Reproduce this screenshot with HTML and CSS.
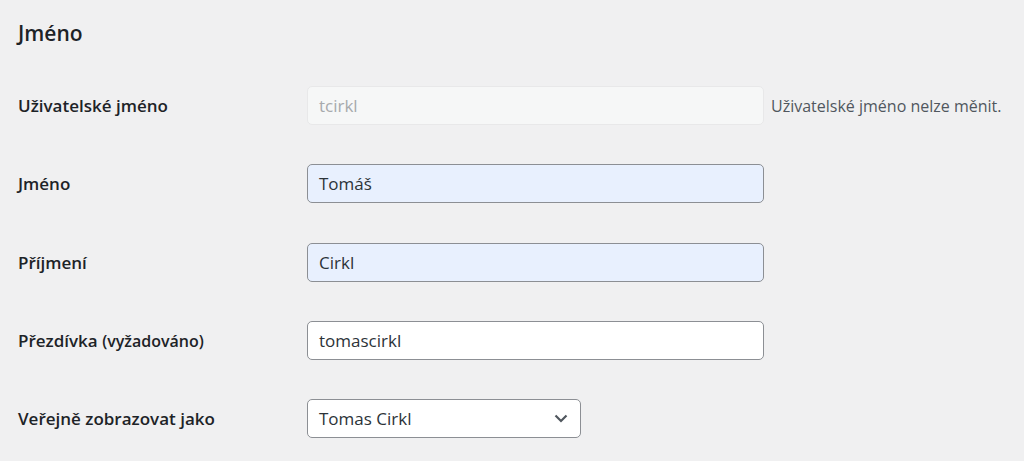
FILE: index.html
```html
<!DOCTYPE html>
<html lang="cs">
<head>
<meta charset="utf-8">
<link rel="stylesheet" href="styles.css">
</head>
<body>
<h2 class="title">Jméno</h2>
<div class="form">
  <div class="row">
    <label class="label">Uživatelské jméno</label>
    <div class="field">
      <div class="input disabled">tcirkl</div>
      <span class="desc">Uživatelské jméno nelze měnit.</span>
    </div>
  </div>
  <div class="row">
    <label class="label">Jméno</label>
    <div class="field"><div class="input autofill">Tomáš</div></div>
  </div>
  <div class="row">
    <label class="label">Příjmení</label>
    <div class="field"><div class="input autofill">Cirkl</div></div>
  </div>
  <div class="row">
    <label class="label">Přezdívka <span class="req">(vyžadováno)</span></label>
    <div class="field"><div class="input">tomascirkl</div></div>
  </div>
  <div class="row">
    <label class="label">Veřejně zobrazovat jako</label>
    <div class="field">
      <div class="input select">Tomas Cirkl
        <svg class="chev" width="14" height="9" viewBox="0 0 14 9"><path d="M1.5 1.5 L7 7 L12.5 1.5" fill="none" stroke="#50575e" stroke-width="2.2"/></svg>
      </div>
    </div>
  </div>
</div>
</body>
</html>
```
FILE: styles.css
```css
html, body {
  margin: 0;
  padding: 0;
  background: #f0f0f1;
}
body {
  font-family: "Open Sans", "Noto Sans", sans-serif;
  color: #1d2327;
  width: 1024px;
  height: 461px;
  overflow: hidden;
}
.title {
  margin: 0;
  padding: 19px 0 0 18px;
  font-size: 21px;
  font-weight: 600;
  line-height: 28px;
  box-sizing: border-box;
  height: 86px;
}
.form {
  display: flex;
  flex-direction: column;
  gap: 39.25px;
  padding-left: 18px;
}
.row {
  display: flex;
  align-items: center;
  height: 39px;
}
.label {
  width: 289px;
  font-size: 17px;
  font-weight: 600;
}
.req {
  font-weight: 600;
  font-size: 16px;
}
.field {
  display: flex;
  align-items: center;
  gap: 7px;
}
.input {
  box-sizing: border-box;
  width: 457px;
  height: 39px;
  border: 1px solid #8c8f94;
  border-radius: 5px;
  background: #fff;
  padding: 0 11px;
  font-size: 17px;
  display: flex;
  align-items: center;
  color: #2c3338;
}
.input.disabled {
  background: #f6f7f7;
  border-color: #e8e8e9;
  color: #a7aaad;
}
.input.autofill {
  background: #e8f0fe;
}
.input.select {
  width: 274px;
  justify-content: space-between;
  padding-right: 12px;
}
.desc {
  font-size: 16px;
  color: #50575e;
}
```
